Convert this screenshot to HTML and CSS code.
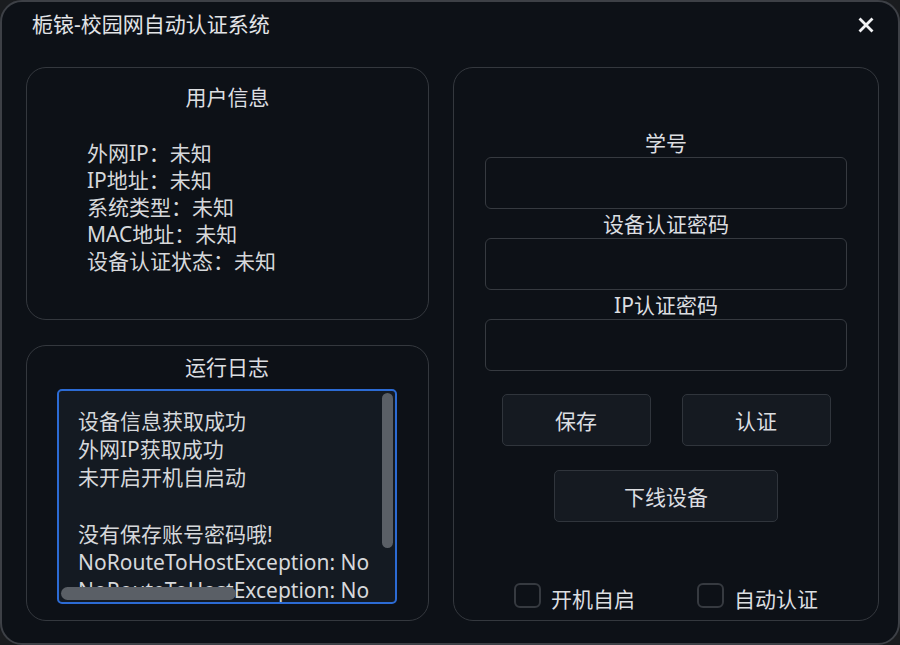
FILE: index.html
```html
<!DOCTYPE html>
<html lang="zh-CN">
<head>
    <meta charset="UTF-8">
    <meta name="viewport" content="width=device-width, initial-scale=1.0">
    <title>栀锿-校园网自动认证系统</title>
    <link rel="stylesheet" href="styles.css">
</head>
<body>
    <div class="window">
        <!-- Title bar -->
        <div class="title-bar">
            <span class="app-title">栀锿-校园网自动认证系统</span>
            <button class="close-btn" aria-label="关闭">
                <svg width="16" height="16" viewBox="0 0 16 16">
                    <path d="M2.5 2.5 L13.5 13.5 M13.5 2.5 L2.5 13.5" stroke="#f2f3f5" stroke-width="2.8" stroke-linecap="square"/>
                </svg>
            </button>
        </div>

        <div class="main">
            <!-- Left column -->
            <div class="left-col">
                <div class="panel info-panel">
                    <h3 class="panel-title">用户信息</h3>
                    <ul class="info-list">
                        <li>外网IP：未知</li>
                        <li>IP地址：未知</li>
                        <li>系统类型：未知</li>
                        <li>MAC地址：未知</li>
                        <li>设备认证状态：未知</li>
                    </ul>
                </div>

                <div class="panel log-panel">
                    <h3 class="panel-title">运行日志</h3>
                    <div class="log-box">
                        <div class="log-text">
                            <p>设备信息获取成功</p>
                            <p>外网IP获取成功</p>
                            <p>未开启开机自启动</p>
                            <p>&nbsp;</p>
                            <p>没有保存账号密码哦!</p>
                            <p>NoRouteToHostException: No</p>
                            <p>NoRouteToHostException: No</p>
                        </div>
                        <div class="scroll-v"></div>
                        <div class="scroll-h"></div>
                    </div>
                </div>
            </div>

            <!-- Right column: login form -->
            <div class="panel form-panel">
                <div class="field">
                    <label for="sid">学号</label>
                    <input type="text" id="sid">
                </div>
                <div class="field">
                    <label for="devpwd">设备认证密码</label>
                    <input type="password" id="devpwd">
                </div>
                <div class="field">
                    <label for="ippwd">IP认证密码</label>
                    <input type="password" id="ippwd">
                </div>

                <div class="btn-row">
                    <button class="btn">保存</button>
                    <button class="btn">认证</button>
                </div>
                <div class="btn-row">
                    <button class="btn btn-wide">下线设备</button>
                </div>

                <div class="check-row">
                    <label class="check"><span class="box"></span>开机自启</label>
                    <label class="check"><span class="box"></span>自动认证</label>
                </div>
            </div>
        </div>
    </div>
</body>
</html>
```

FILE: styles.css
```css
/* Basic reset */
* {
    box-sizing: border-box;
    margin: 0;
    padding: 0;
}

body {
    font-family: "Noto Sans", "Noto Sans CJK SC", sans-serif;
    background-color: #1a1c1f;
    color: #d6d8db;
    width: 900px;
    height: 645px;
    overflow: hidden;
}

.window {
    width: 900px;
    height: 645px;
    background-color: #0d1117;
    border: 2px solid #3d4046;
    border-radius: 22px;
    display: flex;
    flex-direction: column;
}

/* Title bar */
.title-bar {
    height: 65px;
    flex-shrink: 0;
    display: flex;
    align-items: flex-start;
    justify-content: space-between;
    padding: 7px 24px 0 30px;
}

.app-title {
    font-size: 21px;
    line-height: 30px;
    color: #e2e4e7;
}

.close-btn {
    background: none;
    border: none;
    margin-top: 8px;
    width: 16px;
    height: 16px;
    cursor: pointer;
}

.main {
    flex: 1;
    min-height: 0;
    display: flex;
    gap: 24px;
    padding: 0 19px 22px 24px;
}

.left-col {
    width: 403px;
    display: flex;
    flex-direction: column;
    gap: 25px;
}

.panel {
    border: 1.5px solid #34383e;
    border-radius: 20px;
}

.panel-title {
    font-size: 21px;
    font-weight: normal;
    line-height: 28px;
    text-align: center;
    color: #dcdee1;
}

.info-panel {
    height: 253px;
    flex-shrink: 0;
    padding-top: 15px;
}

.info-list {
    list-style: none;
    padding: 29px 0 0 60px;
    font-size: 21px;
    line-height: 27px;
}

.log-panel {
    flex: 1;
    min-height: 0;
    padding: 7px 31px 16px 30px;
    display: flex;
    flex-direction: column;
    gap: 8px;
}

.log-box {
    flex: 1;
    min-height: 0;
    position: relative;
    background-color: #141a22;
    border: 2px solid #2c6bd4;
    border-radius: 5px;
    overflow: hidden;
}

.log-text {
    padding: 16px 14px 0 19px;
    margin-right: 16px;
    height: 100%;
    overflow: hidden;
    white-space: nowrap;
    font-size: 21px;
    line-height: 28.2px;
}

.scroll-v {
    position: absolute;
    top: 2px;
    right: 2px;
    width: 11px;
    height: 155px;
    background-color: #5a5f66;
    border-radius: 6px;
}

.scroll-h {
    position: absolute;
    left: 2px;
    bottom: 2px;
    width: 175px;
    height: 13px;
    background-color: #5a5f66;
    border-radius: 7px;
}

/* Right form */
.form-panel {
    width: 426px;
    padding: 61px 31px 6px 31px;
    display: flex;
    flex-direction: column;
}

.field label {
    display: block;
    text-align: center;
    font-size: 21px;
    line-height: 28px;
    color: #dcdee1;
}

.field input {
    display: block;
    width: 100%;
    height: 52px;
    background-color: #0d1117;
    border: 1.5px solid #363a40;
    border-radius: 6px;
    color: #dcdee1;
    font-size: 18px;
    padding: 0 10px;
    outline: none;
}

.field + .field {
    margin-top: 1px;
}

.btn-row {
    display: flex;
    justify-content: center;
    gap: 31px;
    margin-top: 23px;
}

.btn-row + .btn-row {
    margin-top: 24px;
}

.btn {
    width: 149px;
    height: 52px;
    background-color: #151a21;
    border: 1.5px solid #30353c;
    border-radius: 5px;
    color: #dcdee1;
    font-family: inherit;
    font-size: 21px;
    cursor: pointer;
}

.btn-wide {
    width: 224px;
}

.check-row {
    margin-top: auto;
    display: flex;
    justify-content: center;
    gap: 62px;
}

.check {
    display: flex;
    align-items: center;
    gap: 10px;
    font-size: 21px;
    line-height: 30px;
    color: #dcdee1;
}

.box {
    width: 27px;
    height: 25px;
    border: 2px solid #363a40;
    border-radius: 6px;
    margin-top: -8px;
}
```
